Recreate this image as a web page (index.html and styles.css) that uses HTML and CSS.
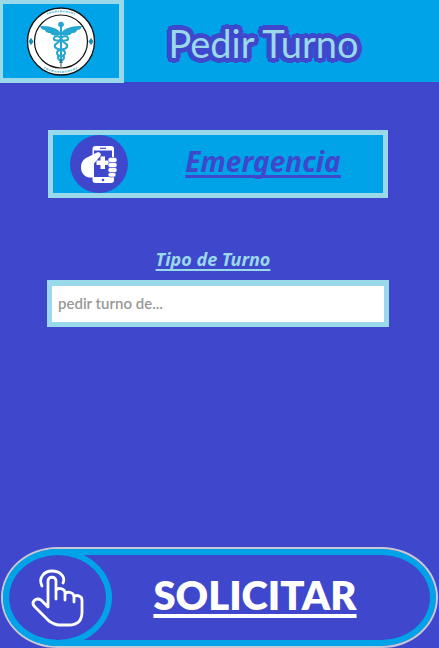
FILE: index.html
```html
<!DOCTYPE html>
<html lang="es">
<head>
<meta charset="utf-8">
<meta name="viewport" content="width=device-width, initial-scale=1">
<title>Pedir Turno</title>
<link rel="stylesheet" href="styles.css">
</head>
<body>
<header class="header">
  <a class="logo" href="#" aria-label="Inicio">
    <svg class="logo-mark" viewBox="0 0 70 70" aria-hidden="true">
      <circle cx="35" cy="35.500" r="33.5" fill="#fff" stroke="#111" stroke-width="1.3"/>
      <circle cx="35" cy="35.500" r="26.5" fill="#fff" stroke="#111" stroke-width="1.2"/>
      <path d="M21 8Q35 2.500 49 8M18 61.500Q35 70.500 52 61.500" fill="none" stroke="#7fc8dc" stroke-width="1.800" stroke-dasharray="1.500 .8 2.500 .7"/>
      <path d="M5 32.500l2 3-2 3-2-3zM65 32.500l2 3-2 3-2-3z" fill="#168fb8" stroke="#168fb8"/>
      <g fill="#23a6d0" stroke="#23a6d0">
        <circle cx="35" cy="18.500" r="2.800" stroke="none"/>
        <path d="M34 26C30 21 22 20 14 20c1 3 3 4 5 4 1 3 3 3 5 3 2 3 7 3 10 2zM36 26c4-5 12-6 20-6-1 3-3 4-5 4-1 3-3 3-5 3-2 3-7 3-10 2z" stroke="none"/>
        <path d="M35 20v35" stroke-width="2"/>
        <path d="M35 35c-5-1-8 0-7-3s7-2 8 2 7 3 5 7-10 1-10 6 8 1 7 5-4 2-4 5M35 35c5-1 8 0 7-3s-7-2-8 2-7 3-5 7 10 1 10 6-8 1-7 5 4 2 4 5" fill="none" stroke-width="2"/>
      </g>
      <path d="M35 53v8" stroke="#444" stroke-width="1"/>
    </svg>
  </a>
  <h1 class="title">Pedir Turno</h1>
</header>
<main class="main">
  <button class="emergency" type="button">
    <svg class="emergency-icon" viewBox="0 0 58 58" aria-hidden="true">
      <circle cx="29" cy="29" r="29" fill="#3f48cc"/>
      <rect x="22.500" y="11" width="21.500" height="37" rx="3" fill="#fff"/>
      <rect x="24" y="15.500" width="18" height="26.500" fill="#3f48cc"/>
      <path d="M30 13.300h6" stroke="#3f48cc" stroke-width="1.200"/>
      <circle cx="33" cy="45" r="1.300" fill="#3f48cc"/>
      <path d="M24 42.500H19c-5-1-8-5-8-10 0-5 2-8 6-10l10-5c3-1 5 2 3 4l-6 7z" fill="#fff"/>
      <path d="M30.500 21.500h4.500v4h4v4.500h-4v4h-4.500v-4h-4v-4.500h4z" fill="#fff"/>
      <g fill="#fff" stroke="#3f48cc" stroke-width=".6">
        <rect x="38" y="22.500" width="9" height="5" rx="2.300"/>
        <rect x="38" y="27.500" width="9" height="5" rx="2.300"/>
        <rect x="38" y="32.500" width="9" height="5" rx="2.300"/>
        <rect x="38" y="37.500" width="8" height="4.500" rx="2.200"/>
      </g>
    </svg>
    <span class="emergency-text">Emergencia</span>
  </button>
  <label class="label" for="tipo">Tipo de Turno</label>
  <input class="field" id="tipo" type="text" placeholder="pedir turno de...">
</main>
<footer class="footer">
  <button class="submit" type="button">
    <span class="submit-badge">
      <svg class="submit-icon" viewBox="0 0 54 58" fill="none" stroke="#fff" stroke-width="2.800" stroke-linecap="round" stroke-linejoin="round" aria-hidden="true">
        <path d="M17 38V12c0-5 8-5 8 0v18M25 22c1-4 9-3 9 2v7M34 25c2-3 9-2 9 3v5M43 28c2-3 8-1 8 3v12c0 9-5 13-13 13H28c-4 0-7-2-10-4L4 38c-5-5 1-10 6-7l7 7"/>
        <path d="M11 17C7 9 13 2 21 2s14 6 11 12"/>
      </svg>
    </span>
    <span class="submit-text">SOLICITAR</span>
  </button>
</footer>
</body>
</html>
```
FILE: styles.css
```css
:root {
  --blue: #3f48cc;
  --cyan: #00a2e8;
  --pale: #99d9ea;
}

* {
  box-sizing: border-box;
}

body {
  margin: 0;
  min-height: 100vh;
  display: flex;
  flex-direction: column;
  background: var(--blue);
  font-family: "Noto Sans", "Open Sans", sans-serif;
}

button {
  padding: 0;
  font-family: inherit;
  cursor: pointer;
}

.header {
  display: flex;
  align-items: flex-start;
  background: linear-gradient(var(--cyan) 82px, var(--blue) 82px);
}

.logo {
  flex: none;
  display: flex;
  justify-content: center;
  align-items: center;
  width: 124px;
  height: 83px;
  border: solid var(--pale);
  border-width: 4px 5px 5px 3px;
}

.logo-mark {
  width: 70px;
  height: 70px;
}

.title {
  flex: 1;
  margin: 0;
  padding: 18px 36px 0 0;
  text-align: center;
  font-family: Lato, "Open Sans", sans-serif;
  font-size: 38px;
  line-height: 50px;
  font-weight: 400;
  color: var(--pale);
  text-shadow:
    5px 0 var(--blue), -5px 0 var(--blue), 0 5px var(--blue), 0 -5px var(--blue),
    4px 3px var(--blue), 3px 4px var(--blue), -4px 3px var(--blue), -3px 4px var(--blue),
    4px -3px var(--blue), 3px -4px var(--blue), -4px -3px var(--blue), -3px -4px var(--blue),
    2px 2px var(--blue), -2px 2px var(--blue), 2px -2px var(--blue), -2px -2px var(--blue);
  white-space: nowrap;
}

.main {
  flex: 1;
  display: flex;
  flex-direction: column;
  padding: 47px 50px 0 47px;
}

.emergency {
  display: flex;
  align-items: center;
  height: 68px;
  margin: 0 1px;
  padding: 0 17px;
  border: 5px solid var(--pale);
  background: var(--cyan);
  color: var(--blue);
}

.emergency-icon {
  flex: none;
  width: 58px;
  height: 58px;
}

.emergency-text {
  flex: 1;
  padding: 0 0 6px 32px;
  font-size: 28px;
  line-height: 40px;
  font-weight: 700;
  font-style: italic;
  text-decoration: underline 3px;
  text-underline-offset: 3px;
  text-decoration-skip-ink: none;
}

.label {
  align-self: center;
  margin: 48px 10px 8px 0;
  font-size: 18px;
  line-height: 26px;
  font-weight: 700;
  font-style: italic;
  color: var(--pale);
  text-decoration: underline 2px;
  text-underline-offset: 3px;
  text-decoration-skip-ink: none;
}

.field {
  width: 100%;
  height: 47px;
  padding: 0 6px 2px;
  border: 5px solid var(--pale);
  border-top-width: 6px;
  border-radius: 0;
  background: #fff;
  font-family: Lato, "Open Sans", sans-serif;
  font-size: 15px;
  font-weight: 600;
  color: #333;
}

.field::placeholder {
  color: #999;
  opacity: 1;
}

.footer {
  padding: 0 1px;
}

.submit {
  display: flex;
  width: 100%;
  height: 101px;
  border: 2px solid #c8c8d4;
  border-radius: 57px / 51px;
  background: var(--blue);
  box-shadow: inset 0 0 0 6px var(--cyan);
  color: #fff;
}

.submit-badge {
  flex: none;
  display: flex;
  justify-content: center;
  align-items: center;
  width: 109px;
  height: 97px;
  border: 6px solid var(--cyan);
  border-radius: 50%;
}

.submit-icon {
  width: 54px;
  height: 58px;
}

.submit-text {
  flex: 1;
  padding: 20px 38px 0 0;
  text-align: center;
  font-family: Lato, "Open Sans", sans-serif;
  font-size: 40px;
  line-height: 52px;
  font-weight: 800;
  text-decoration: underline 4px;
  text-underline-offset: 4px;
}
```
